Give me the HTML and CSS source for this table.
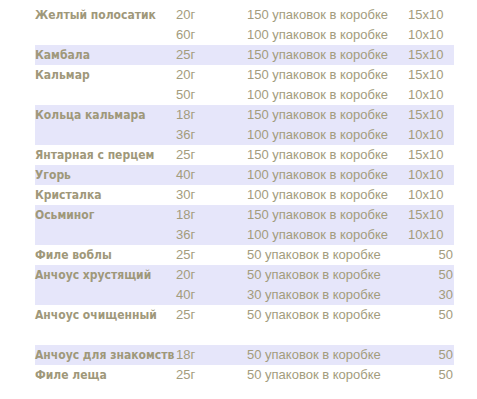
FILE: index.html
```html
<!DOCTYPE html>
<html lang="ru">
<head>
<meta charset="utf-8">
<title>Ассортимент</title>
<link rel="stylesheet" href="styles.css">
</head>
<body>
<table class="price">
  <colgroup>
    <col class="c-name"><col class="c-weight"><col class="c-pack"><col class="c-box">
  </colgroup>
  <tbody>
    <tr><td class="name">Желтый полосатик</td><td>20г</td><td>150 упаковок в коробке</td><td>15x10</td></tr>
    <tr><td class="name"></td><td>60г</td><td>100 упаковок в коробке</td><td>10x10</td></tr>
    <tr class="hl"><td class="name">Камбала</td><td>25г</td><td>150 упаковок в коробке</td><td>15x10</td></tr>
    <tr><td class="name">Кальмар</td><td>20г</td><td>150 упаковок в коробке</td><td>15x10</td></tr>
    <tr><td class="name"></td><td>50г</td><td>100 упаковок в коробке</td><td>10x10</td></tr>
    <tr class="hl"><td class="name">Кольца кальмара</td><td>18г</td><td>150 упаковок в коробке</td><td>15x10</td></tr>
    <tr class="hl"><td class="name"></td><td>36г</td><td>100 упаковок в коробке</td><td>10x10</td></tr>
    <tr><td class="name">Янтарная с перцем</td><td>25г</td><td>150 упаковок в коробке</td><td>15x10</td></tr>
    <tr class="hl"><td class="name">Угорь</td><td>40г</td><td>100 упаковок в коробке</td><td>10x10</td></tr>
    <tr><td class="name">Кристалка</td><td>30г</td><td>100 упаковок в коробке</td><td>10x10</td></tr>
    <tr class="hl"><td class="name">Осьминог</td><td>18г</td><td>150 упаковок в коробке</td><td>15x10</td></tr>
    <tr class="hl"><td class="name"></td><td>36г</td><td>100 упаковок в коробке</td><td>10x10</td></tr>
    <tr><td class="name">Филе воблы</td><td>25г</td><td>50 упаковок в коробке</td><td class="num">50</td></tr>
    <tr class="hl"><td class="name">Анчоус хрустящий</td><td>20г</td><td>50 упаковок в коробке</td><td class="num">50</td></tr>
    <tr class="hl"><td class="name"></td><td>40г</td><td>30 упаковок в коробке</td><td class="num">30</td></tr>
    <tr><td class="name">Анчоус очищенный</td><td>25г</td><td>50 упаковок в коробке</td><td class="num">50</td></tr>
    <tr><td class="name"></td><td></td><td></td><td></td></tr>
    <tr class="hl"><td class="name">Анчоус для знакомств</td><td>18г</td><td>50 упаковок в коробке</td><td class="num">50</td></tr>
    <tr><td class="name">Филе леща</td><td>25г</td><td>50 упаковок в коробке</td><td class="num">50</td></tr>
  </tbody>
</table>
</body>
</html>
```

FILE: styles.css
```css
html, body {
  margin: 0;
  padding: 0;
  background: #ffffff;
}

body {
  padding: 5px 0 0 35px;
}

.price {
  border-collapse: collapse;
  table-layout: fixed;
  width: 419px;
  font-family: "Liberation Sans", Arial, sans-serif;
  font-size: 13px;
  color: #a39c7d;
}

.c-name { width: 141px; }
.c-weight { width: 71px; }
.c-pack { width: 161px; }
.c-box { width: 46px; }

.price td {
  padding: 0;
  height: 20px;
  line-height: 20px;
  white-space: nowrap;
  overflow: visible;
  vertical-align: middle;
}

.price td.name {
  font-family: "DejaVu Sans Condensed", "DejaVu Sans", sans-serif;
  font-weight: bold;
  font-size: 12px;
  color: #9f987a;
}

.price td.num {
  text-align: right;
  padding-right: 1px;
}

.price tr.hl td {
  background: #e6e6fa;
}
```
